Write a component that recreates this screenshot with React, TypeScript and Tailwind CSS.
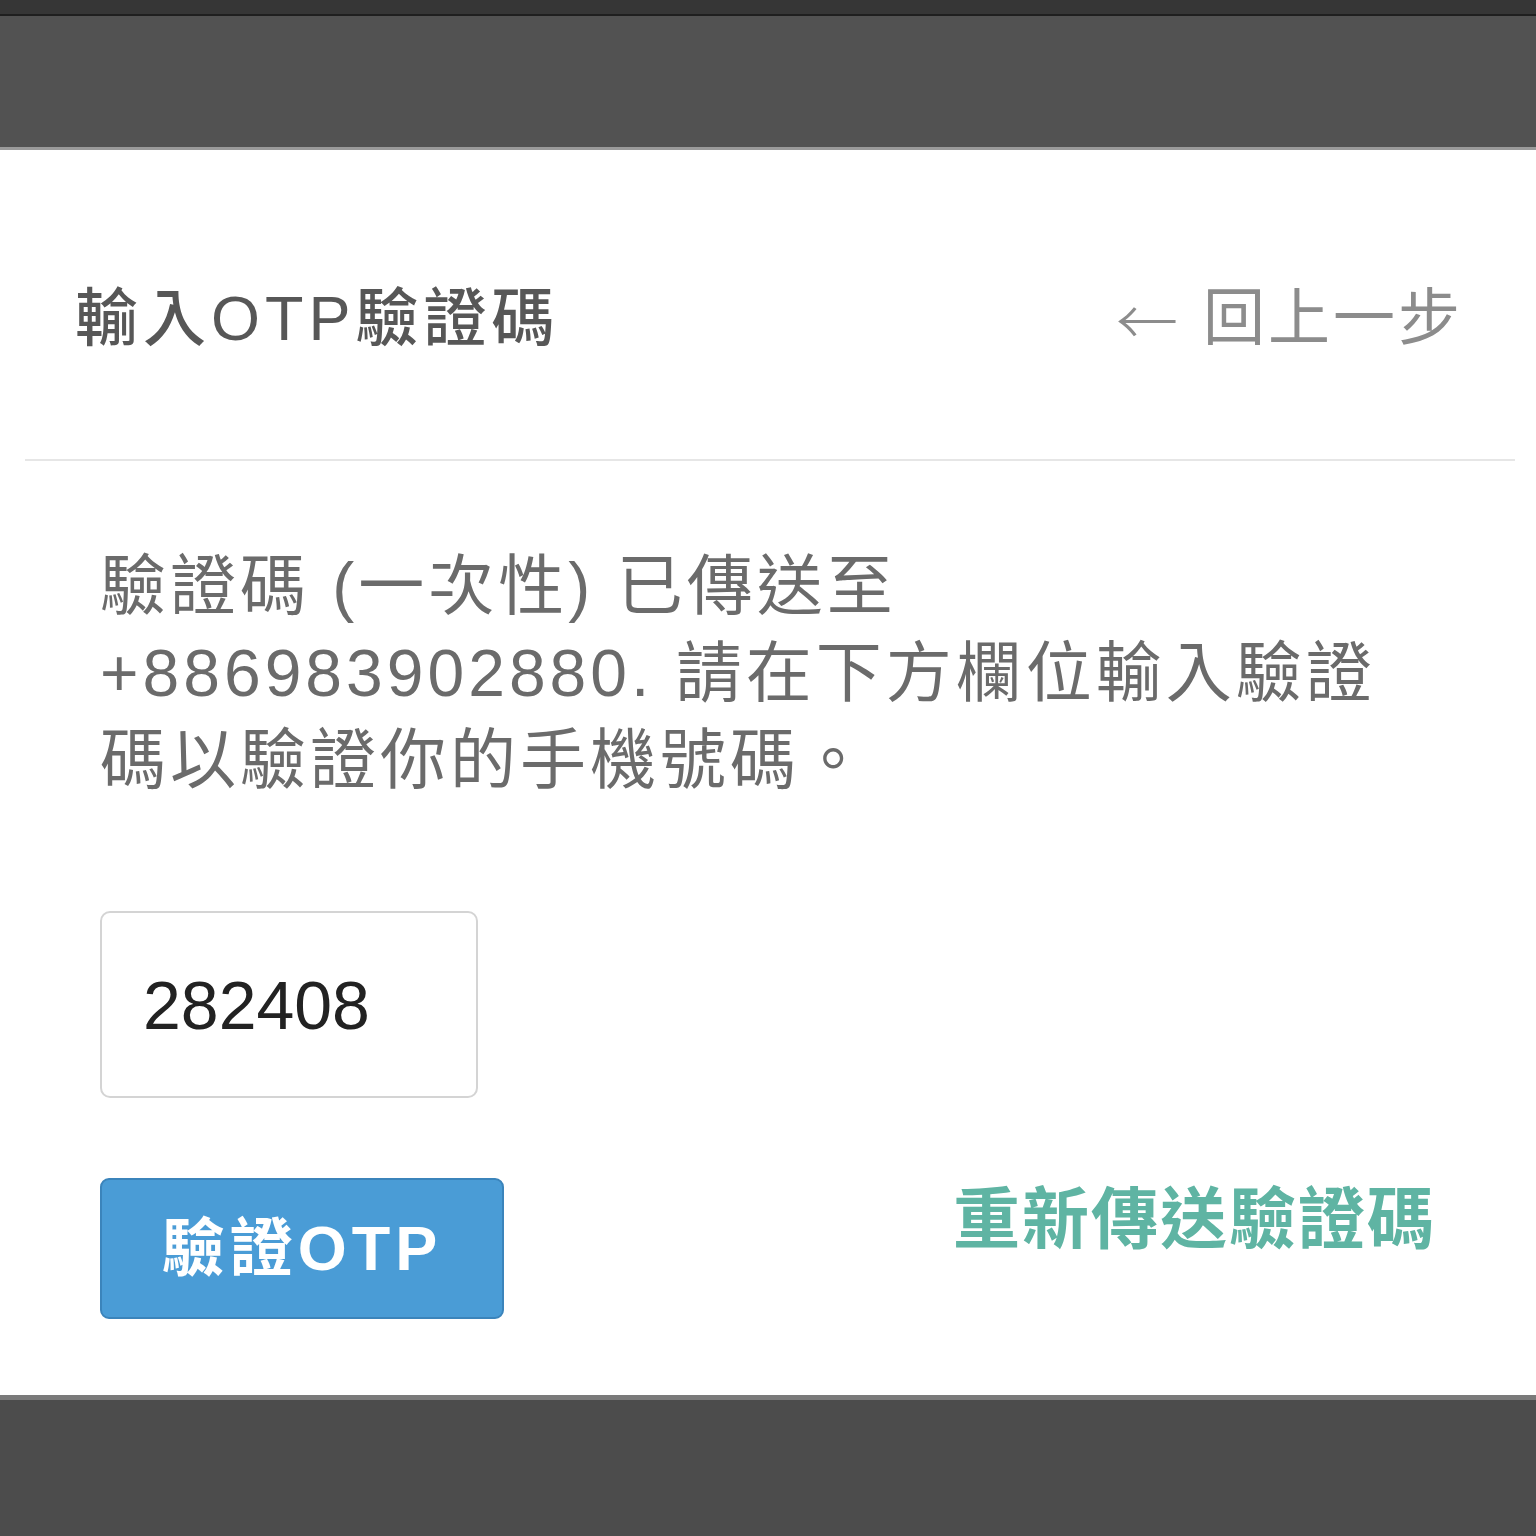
import React from 'react';

const FONT = { fontFamily: '"Liberation Sans", "Noto Sans CJK TC", sans-serif' };

export default function App() {
  return (
    <div className="w-full h-[1536px] bg-[#525252] flex flex-col" style={FONT}>
      {/* top bar */}
      <div className="h-[16px] bg-[#363636] border-b-[2px] border-[#1f1f1f]" />
      <div className="h-[134px] border-b-[3px] border-[#9a9a9a]" />

      {/* card */}
      <div className="bg-white h-[1245px] flex flex-col">
        <div className="h-[309px] flex items-center justify-between pl-[75px] pr-[73px] pt-[28px]">
          <h2 className="text-[63px] font-medium tracking-[5px] text-[#575757] leading-none">輸入OTP驗證碼</h2>
          <span className="text-[62px] tracking-[3px] text-[#8c8c8c] leading-none flex items-center">
            <span className="font-['Noto_Sans_CJK_TC'] font-light mr-[22px]">←</span>回上一步
          </span>
        </div>
        <div className="ml-[25px] mr-[21px] h-[2px] bg-[#e6e6e6]" />

        <div className="px-[100px] pt-[82px]">
          <p className="text-[66px] leading-[87px] tracking-[4px] text-[#6b6b6b]">
            <span className="block">驗證碼 (一次性) 已傳送至</span>
            <span className="block">+886983902880. 請在下方欄位輸入驗證</span>
            <span className="block">碼以驗證你的手機號碼。</span>
          </p>

          <div className="mt-[107px] w-[378px] h-[187px] border-2 border-[#d4d4d4] rounded-[10px] flex items-center pl-[41px]">
            <span className="text-[68px] text-[#222] leading-none">282408</span>
          </div>

          <div className="mt-[80px] flex items-start justify-between">
            <button className="w-[404px] h-[141px] bg-[#4a9cd6] border-2 border-[#3b84bb] rounded-[9px] text-white text-[63px] font-bold tracking-[5px] leading-none">
              驗證OTP
            </button>
            <span className="pt-[8px] text-[67px] font-bold tracking-[2px] text-[#5fb4a3] leading-none">重新傳送驗證碼</span>
          </div>
        </div>
      </div>

      <div className="flex-1 bg-[#4c4c4c] border-t-[5px] border-[#7a7a7a]" />
    </div>
  );
}
